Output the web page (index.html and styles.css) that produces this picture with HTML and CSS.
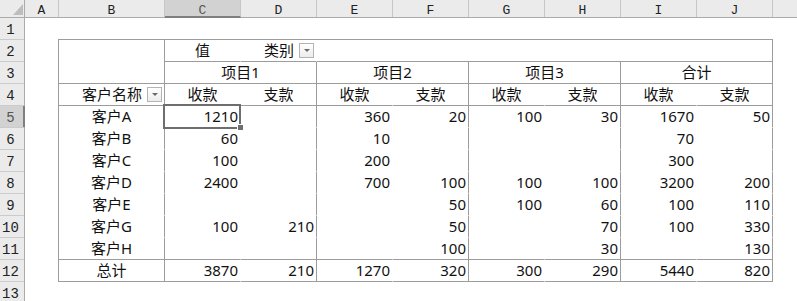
FILE: index.html
```html
<!DOCTYPE html>
<html lang="zh-CN">
<head>
<meta charset="utf-8">
<title>数据透视表</title>
<link rel="stylesheet" href="styles.css">
</head>
<body>
<div class="sheet">
  <div class="colhdr">
    <div class="corner"><svg width="10" height="11" viewBox="0 0 10 11"><polygon points="10,0 10,11 0,11" fill="#bdbdbd"/></svg></div>
    <div class="ch w-a">A</div>
    <div class="ch w-b">B</div>
    <div class="ch w-n sel">C</div>
    <div class="ch w-n">D</div>
    <div class="ch w-n">E</div>
    <div class="ch w-n">F</div>
    <div class="ch w-n">G</div>
    <div class="ch w-n">H</div>
    <div class="ch w-n">I</div>
    <div class="ch w-n">J</div>
    <div class="ch w-rest"></div>
  </div>
  <div class="main">
    <div class="rowhdr">
      <div class="rh">1</div>
      <div class="rh">2</div>
      <div class="rh">3</div>
      <div class="rh">4</div>
      <div class="rh sel">5</div>
      <div class="rh">6</div>
      <div class="rh">7</div>
      <div class="rh">8</div>
      <div class="rh">9</div>
      <div class="rh">10</div>
      <div class="rh">11</div>
      <div class="rh">12</div>
      <div class="rh">13</div>
    </div>
    <div class="cells">
      <div class="pivot">
        <!-- row 2 / 3 -->
        <div class="c br bb span-r2"></div>
        <div class="c bb ctr">值</div>
        <div class="c bb fld"><span>类别</span><span class="dd"></span></div>
        <div class="c bb br span-c6"></div>
        <div class="c bb br ctr span-c2">项目1</div>
        <div class="c bb br ctr span-c2">项目2</div>
        <div class="c bb br ctr span-c2">项目3</div>
        <div class="c bb br ctr span-c2">合计</div>
        <!-- row 4 -->
        <div class="c bb br fld"><span>客户名称</span><span class="dd"></span></div>
        <div class="c bb ctr">收款</div>
        <div class="c bb br ctr">支款</div>
        <div class="c bb ctr">收款</div>
        <div class="c bb br ctr">支款</div>
        <div class="c bb ctr">收款</div>
        <div class="c bb br ctr">支款</div>
        <div class="c bb ctr">收款</div>
        <div class="c bb br ctr">支款</div>
        <!-- row 5 -->
        <div class="c br ctr">客户A</div>
        <div class="c num active">1210<span class="selbox"></span><span class="handle"></span></div>
        <div class="c br num"></div>
        <div class="c num">360</div>
        <div class="c br num">20</div>
        <div class="c num">100</div>
        <div class="c br num">30</div>
        <div class="c num">1670</div>
        <div class="c br num">50</div>
        <!-- row 6 -->
        <div class="c br ctr">客户B</div>
        <div class="c num">60</div>
        <div class="c br num"></div>
        <div class="c num">10</div>
        <div class="c br num"></div>
        <div class="c num"></div>
        <div class="c br num"></div>
        <div class="c num">70</div>
        <div class="c br num"></div>
        <!-- row 7 -->
        <div class="c br ctr">客户C</div>
        <div class="c num">100</div>
        <div class="c br num"></div>
        <div class="c num">200</div>
        <div class="c br num"></div>
        <div class="c num"></div>
        <div class="c br num"></div>
        <div class="c num">300</div>
        <div class="c br num"></div>
        <!-- row 8 -->
        <div class="c br ctr">客户D</div>
        <div class="c num">2400</div>
        <div class="c br num"></div>
        <div class="c num">700</div>
        <div class="c br num">100</div>
        <div class="c num">100</div>
        <div class="c br num">100</div>
        <div class="c num">3200</div>
        <div class="c br num">200</div>
        <!-- row 9 -->
        <div class="c br ctr">客户E</div>
        <div class="c num"></div>
        <div class="c br num"></div>
        <div class="c num"></div>
        <div class="c br num">50</div>
        <div class="c num">100</div>
        <div class="c br num">60</div>
        <div class="c num">100</div>
        <div class="c br num">110</div>
        <!-- row 10 -->
        <div class="c br ctr">客户G</div>
        <div class="c num">100</div>
        <div class="c br num">210</div>
        <div class="c num"></div>
        <div class="c br num">50</div>
        <div class="c num"></div>
        <div class="c br num">70</div>
        <div class="c num">100</div>
        <div class="c br num">330</div>
        <!-- row 11 -->
        <div class="c br bb ctr">客户H</div>
        <div class="c bb num"></div>
        <div class="c br bb num"></div>
        <div class="c bb num"></div>
        <div class="c br bb num">100</div>
        <div class="c bb num"></div>
        <div class="c br bb num">30</div>
        <div class="c bb num"></div>
        <div class="c br bb num">130</div>
        <!-- row 12 -->
        <div class="c br bb ctr">总计</div>
        <div class="c bb num">3870</div>
        <div class="c br bb num">210</div>
        <div class="c bb num">1270</div>
        <div class="c br bb num">320</div>
        <div class="c bb num">300</div>
        <div class="c br bb num">290</div>
        <div class="c bb num">5440</div>
        <div class="c br bb num">820</div>
      </div>
    </div>
  </div>
</div>
</body>
</html>
```

FILE: styles.css
```css
html, body {
  margin: 0;
  padding: 0;
  background: #ffffff;
}

.sheet {
  width: 797px;
  height: 301px;
  overflow: hidden;
  background: #ffffff;
}

/* column headers */
.colhdr {
  display: flex;
  height: 18px;
  box-sizing: border-box;
  border-bottom: 1px solid #ababab;
  background: #ebebeb;
}

.corner {
  width: 25px;
  flex: none;
  box-sizing: border-box;
  border-right: 1px solid #ababab;
  display: flex;
  justify-content: flex-end;
  align-items: flex-end;
  padding: 0 1px 2px 0;
}

.corner svg {
  display: block;
}

.ch {
  flex: none;
  box-sizing: border-box;
  height: 17px;
  border-right: 1px solid #c6c6c6;
  text-align: center;
  font-family: "Liberation Mono", "DejaVu Sans Mono", monospace;
  font-size: 13px;
  line-height: 14px;
  padding-top: 4px;
  color: #222222;
}

.ch.sel {
  background: #d2d2d2;
  color: #555555;
  border-bottom: 2px solid #7f7f7f;
  height: 18px;
  margin-bottom: -1px;
}

.w-a { width: 34px; }
.w-b { width: 106px; }
.w-n { width: 76px; }
.w-rest { flex: 1; border-right: none; }

/* main area */
.main {
  display: flex;
}

.rowhdr {
  width: 25px;
  flex: none;
  box-sizing: border-box;
  border-right: 1px solid #ababab;
  background: #ebebeb;
}

.rh {
  height: 22px;
  box-sizing: border-box;
  border-bottom: 1px solid #cbcbcb;
  font-family: "Liberation Mono", "DejaVu Sans Mono", monospace;
  font-size: 14px;
  line-height: 19px;
  padding-top: 3px;
  padding-right: 3px;
  text-align: center;
  color: #222222;
  overflow: hidden;
}

.rh.sel {
  background: #d2d2d2;
  color: #555555;
  box-shadow: inset -1px 0 0 #7f7f7f;
  margin-right: -1px;
  border-right: 1px solid #7f7f7f;
}

.cells {
  flex: 1;
  padding: 21px 0 0 33px;
}

/* pivot table */
.pivot {
  display: grid;
  grid-template-columns: 106px repeat(8, 76px);
  grid-auto-rows: 22px;
  width: max-content;
  border-left: 1px solid #9c9c9c;
  border-top: 1px solid #9c9c9c;
  font-family: "Noto Sans", "Noto Sans CJK SC", sans-serif;
  font-size: 15px;
  color: #111111;
}

.c {
  box-sizing: border-box;
  border-right: 1px solid transparent;
  border-bottom: 1px solid transparent;
  line-height: 21px;
  white-space: nowrap;
}

.br { border-right-color: #9c9c9c; }
.bb { border-bottom-color: #9c9c9c; }

.ctr { text-align: center; }
.num { text-align: right; padding-right: 2px; }

.span-r2 { grid-row: span 2; }
.span-c2 { grid-column: span 2; }
.span-c6 { grid-column: span 6; }

.fld {
  display: flex;
  justify-content: flex-end;
  align-items: center;
  gap: 5px;
  padding-right: 2px;
}

.dd {
  width: 15px;
  height: 15px;
  box-sizing: border-box;
  border: 1px solid #b4b4b4;
  background: linear-gradient(#ffffff, #ececec);
  display: flex;
  align-items: center;
  justify-content: center;
}

.dd::after {
  content: "";
  width: 0;
  height: 0;
  border-left: 3px solid transparent;
  border-right: 3px solid transparent;
  border-top: 3px solid #6a6a6a;
}

/* active cell selection */
.active {
  position: relative;
}

.selbox {
  position: absolute;
  left: -2px;
  top: -2px;
  width: 78px;
  height: 25px;
  box-sizing: border-box;
  border: 2px solid #6e6e6e;
}

.handle {
  position: absolute;
  left: 72px;
  top: 18px;
  width: 5px;
  height: 5px;
  background: #6e6e6e;
  border: 1px solid #ffffff;
}
```
